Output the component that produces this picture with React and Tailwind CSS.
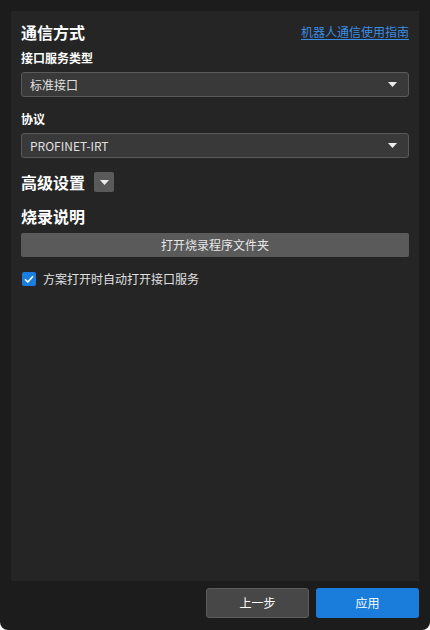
import React from "react";

const font = { fontFamily: '"Noto Sans CJK SC", "Noto Sans", sans-serif' };

function Caret({ className = "" }) {
  return (
    <svg width="9" height="5" viewBox="0 0 9 5" className={className}>
      <path d="M0 0 H9 L4.5 5 Z" fill="#ededed" />
    </svg>
  );
}

function Select({ value }) {
  return (
    <div className="flex h-[25px] items-center justify-between rounded-[3px] border border-[#5a5a5a] bg-[#393939] pl-[8px] pr-[11px]">
      <span className="text-[12px] leading-none text-[#e0e0e0]">{value}</span>
      <Caret />
    </div>
  );
}

export default function App() {
  return (
    <div className="h-[630px] w-[430px] bg-white" style={font}>
      <div className="flex h-[630px] w-[430px] flex-col rounded-b-[8px] bg-[#1c1c1c] pl-[11px] pr-[11px] pt-[11px]">
        <div className="flex h-[570px] flex-col bg-[#252525] px-[10px] pt-[9px]">
          <div className="flex h-[24px] items-center justify-between">
            <span className="text-[16px] font-bold leading-[24px] text-white">通信方式</span>
            <a className="text-[12px] leading-[18px] text-[#3a8ee6] underline underline-offset-2">
              机器人通信使用指南
            </a>
          </div>
          <div className="mt-[4.5px] text-[12px] font-bold leading-[18px] text-white">接口服务类型</div>
          <div className="mt-[5.5px]">
            <Select value="标准接口" />
          </div>
          <div className="mt-[12.5px] text-[12px] font-bold leading-[18px] text-white">协议</div>
          <div className="mt-[5.5px]">
            <Select value="PROFINET-IRT" />
          </div>
          <div className="mt-[14px] flex h-[20px] items-center gap-[9px]">
            <span className="text-[16px] font-bold leading-[20px] text-white">高级设置</span>
            <div className="flex h-[20px] w-[20px] items-center justify-center rounded-[2px] bg-[#5a5a5a]">
              <Caret />
            </div>
          </div>
          <div className="mt-[12px] text-[16px] font-bold leading-[24px] text-white">烧录说明</div>
          <div className="mt-[5px] flex h-[24px] items-center justify-center rounded-[2px] bg-[#5a5a5a] text-[12px] text-[#e8e8e8]">
            打开烧录程序文件夹
          </div>
          <div className="mt-[13px] flex h-[18px] items-center gap-[7px] pl-[1px]">
            <div className="flex h-[14px] w-[14px] items-center justify-center rounded-[2px] bg-[#1a7ee0]">
              <svg width="10" height="8" viewBox="0 0 10 8">
                <path d="M1 4.2 L3.8 7 L9 1.2" stroke="white" strokeWidth="1.6" fill="none" />
              </svg>
            </div>
            <span className="text-[12px] leading-[18px] text-[#e0e0e0]">方案打开时自动打开接口服务</span>
          </div>
        </div>
        <div className="mt-[7px] flex justify-end gap-[7px]">
          <div className="flex h-[30px] w-[103px] items-center justify-center rounded-[3px] border border-[#5c5c5c] bg-[#474747] text-[12px] text-white">
            上一步
          </div>
          <div className="flex h-[30px] w-[103px] items-center justify-center rounded-[3px] bg-[#1a7ddc] text-[12px] text-white">
            应用
          </div>
        </div>
      </div>
    </div>
  );
}
